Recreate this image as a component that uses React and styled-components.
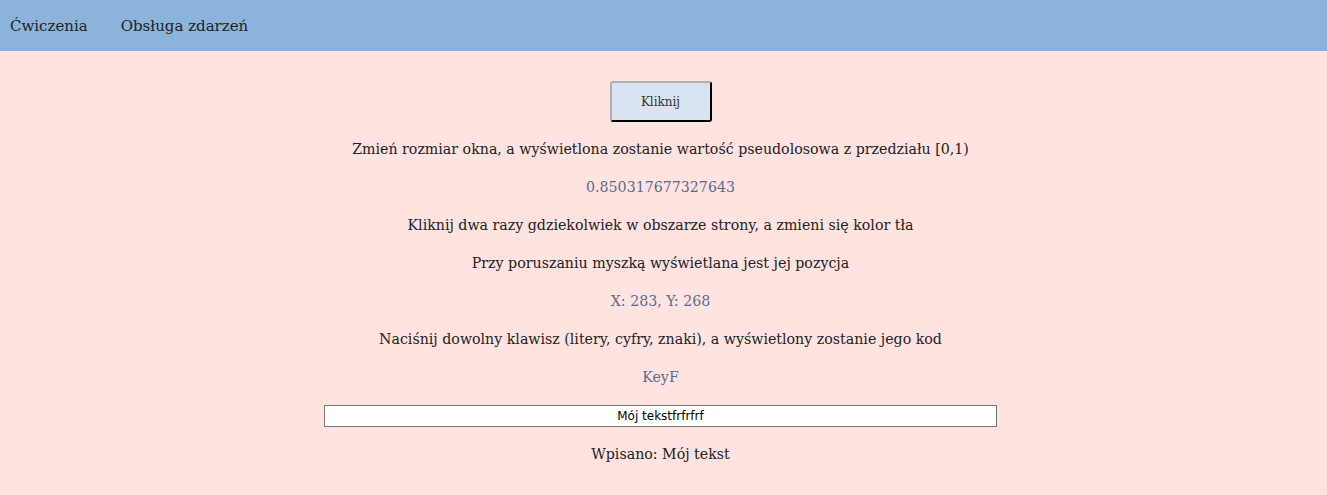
import * as React from 'react'
import styled, { createGlobalStyle } from 'styled-components'

const GlobalStyle = createGlobalStyle`
  html, body {
    margin: 0;
    padding: 0;
    background: #ffe3e1;
  }
  body {
    font-family: "DejaVu Serif", serif;
    color: #222;
  }
`

const Nav = styled.nav`
  display: flex;
  align-items: center;
  height: 51px;
  padding: 0 10px;
  gap: 33px;
  background: #8cb3da;
`
const NavLink = styled.a`
  font-size: 15px;
  color: #222;
  text-decoration: none;
  cursor: pointer;
`
const Main = styled.main`
  display: flex;
  flex-direction: column;
  align-items: center;
  padding: 30px 6px 0 0;
`
const Button = styled.button`
  width: 102px;
  height: 41px;
  background: #dae4f0;
  border: 2px outset #9a9a9a;
  border-color: #b0b0b0 #505050 #505050 #b0b0b0;
  border-radius: 3px;
  font-family: "DejaVu Serif", serif;
  font-size: 12px;
  color: #333;
`
const Text = styled.p`
  margin: 16px 0 0;
  font-size: 14.2px;
  line-height: 22px;
  color: ${props => props.value ? '#5b6a8c' : '#222'};
`
const Input = styled.input`
  margin-top: 17px;
  width: 673px;
  height: 22px;
  box-sizing: border-box;
  border: 1px solid #767676;
  background: #fff;
  text-align: center;
  font-family: "DejaVu Sans", sans-serif;
  font-size: 12px;
  color: #000;
  outline: none;
`

export default function App() {
  const [value, setValue] = React.useState('Mój tekstfrfrfrf')
  return (
    <>
      <GlobalStyle />
      <Nav>
        <NavLink>Ćwiczenia</NavLink>
        <NavLink>Obsługa zdarzeń</NavLink>
      </Nav>
      <Main>
        <Button>Kliknij</Button>
        <Text>Zmień rozmiar okna, a wyświetlona zostanie wartość pseudolosowa z przedziału [0,1)</Text>
        <Text value>0.850317677327643</Text>
        <Text>Kliknij dwa razy gdziekolwiek w obszarze strony, a zmieni się kolor tła</Text>
        <Text>Przy poruszaniu myszką wyświetlana jest jej pozycja</Text>
        <Text value>X: 283, Y: 268</Text>
        <Text>Naciśnij dowolny klawisz (litery, cyfry, znaki), a wyświetlony zostanie jego kod</Text>
        <Text value>KeyF</Text>
        <Input value={value} onChange={e => setValue(e.target.value)} />
        <Text>Wpisano: Mój tekst</Text>
      </Main>
    </>
  )
}
